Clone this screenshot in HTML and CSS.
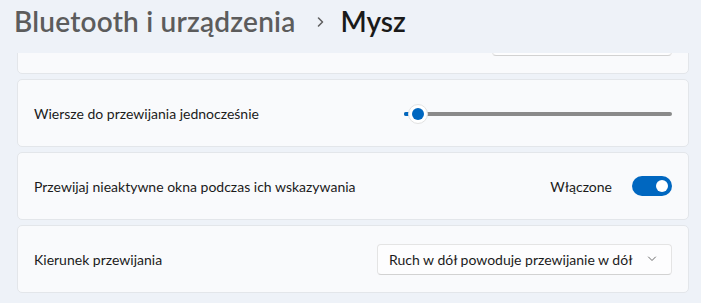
FILE: index.html
```html
<!DOCTYPE html>
<html lang="pl">
<head>
    <meta charset="utf-8">
    <title>Mysz - Ustawienia</title>
    <link rel="stylesheet" href="styles.css">
</head>
<body>
    <header class="page-header">
        <h1>
            <span class="crumb">Bluetooth i urządzenia</span>
            <svg class="crumb-sep" width="7" height="10" viewBox="0 0 7 10">
                <polyline points="1.5,1 5.5,5 1.5,9" fill="none" stroke="#5d5d5d" stroke-width="1.5" stroke-linecap="round" stroke-linejoin="round"/>
            </svg>
            <span class="current">Mysz</span>
        </h1>
    </header>

    <div class="scroller">
        <div class="list">
            <div class="card">
                <span class="label"></span>
                <div class="combo combo-empty"></div>
            </div>

            <div class="card">
                <span class="label">Wiersze do przewijania jednocześnie</span>
                <div class="slider">
                    <div class="track">
                        <div class="track-fill"></div>
                    </div>
                    <div class="thumb"><div class="thumb-dot"></div></div>
                </div>
            </div>

            <div class="card">
                <span class="label">Przewijaj nieaktywne okna podczas ich wskazywania</span>
                <div class="toggle-wrap">
                    <span class="toggle-text">Włączone</span>
                    <div class="toggle"><div class="knob"></div></div>
                </div>
            </div>

            <div class="card">
                <span class="label">Kierunek przewijania</span>
                <div class="combo">
                    <span>Ruch w dół powoduje przewijanie w dół</span>
                    <svg class="combo-arrow" width="10" height="6" viewBox="0 0 10 6">
                        <polyline points="1.5,1 5,4.5 8.5,1" fill="none" stroke="#6a6a6a" stroke-width="1" stroke-linecap="round" stroke-linejoin="round"/>
                    </svg>
                </div>
            </div>
        </div>
    </div>
</body>
</html>
```

FILE: styles.css
```css
body {
    margin: 0;
    padding: 0;
    width: 701px;
    height: 303px;
    overflow: hidden;
    background-color: #eef2f8;
    font-family: Lato, "Noto Sans", sans-serif;
    color: #1b1b1b;
}

.page-header {
    height: 53px;
    padding-left: 14px;
    box-sizing: border-box;
}

.page-header h1 {
    margin: 0;
    padding-top: 1px;
    font-size: 28px;
    font-weight: 600;
    line-height: 40px;
    display: flex;
    align-items: center;
}

.crumb {
    color: #5c5c5c;
    letter-spacing: 0.22px;
}

.crumb-sep {
    margin: 1px 17px 0 21px;
}

.current {
    color: #1a1a1a;
}

.scroller {
    height: 250px;
    overflow: hidden;
}

.list {
    margin-top: -47px;
    padding: 0 12px 0 17px;
    display: flex;
    flex-direction: column;
    gap: 5px;
}

.card {
    height: 68px;
    box-sizing: border-box;
    padding: 0 16px;
    background-color: #f9fafc;
    border: 1px solid #e3e6ea;
    border-radius: 5px;
    display: flex;
    align-items: center;
    justify-content: space-between;
    font-size: 14px;
}

/* dropdown */
.combo {
    width: 295px;
    height: 31px;
    box-sizing: border-box;
    padding: 0 14px 0 11px;
    background-color: #fdfdfe;
    border: 1px solid #e4e4e4;
    border-bottom-color: #d2d2d2;
    border-radius: 4px;
    display: flex;
    align-items: center;
    justify-content: space-between;
    font-size: 14px;
    margin-top: 1px;
}

.combo-empty {
    width: 180px;
}

.combo-arrow {
    margin-bottom: 1px;
}

/* slider */
.slider {
    position: relative;
    width: 268px;
    height: 20px;
    display: flex;
    align-items: center;
    margin-top: 2px;
}

.track {
    width: 100%;
    height: 4px;
    border-radius: 2px;
    background-color: #8a8a8a;
}

.track-fill {
    width: 6px;
    height: 4px;
    border-radius: 2px;
    background-color: #0067c0;
}

.thumb {
    position: absolute;
    left: 4px;
    top: 0;
    width: 20px;
    height: 20px;
    box-sizing: border-box;
    border-radius: 50%;
    background-color: #ffffff;
    border: 1px solid #e2e2e2;
    display: flex;
    align-items: center;
    justify-content: center;
}

.thumb-dot {
    width: 12px;
    height: 12px;
    border-radius: 50%;
    background-color: #0067c0;
}

/* toggle */
.toggle-wrap {
    display: flex;
    align-items: center;
    gap: 20px;
}

.toggle {
    width: 40px;
    height: 20px;
    border-radius: 10px;
    background-color: #0067c0;
    display: flex;
    align-items: center;
    justify-content: flex-end;
    padding-right: 4px;
    box-sizing: border-box;
}

.knob {
    width: 12px;
    height: 12px;
    border-radius: 50%;
    background-color: #ffffff;
}
```
